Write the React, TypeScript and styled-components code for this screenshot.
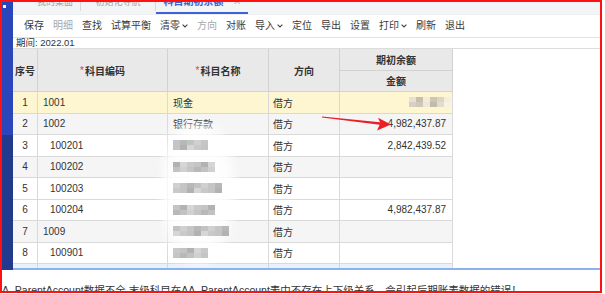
import React from 'react';
import styled, { createGlobalStyle } from 'styled-components';

const GlobalStyle = createGlobalStyle`
  html, body {
    margin: 0;
    padding: 0;
    background: #fff;
  }
  body {
    font-family: "Liberation Sans", "Noto Sans CJK SC", sans-serif;
    color: #333;
  }
`;

type Row = {
  no: number;
  code: string;
  level: 1 | 2;
  name?: string;
  blur?: number;
  dir: string;
  amount?: string;
  blurAmount?: boolean;
  tone: 'sel' | 'odd' | 'even' | 'blue';
};

const rows: Row[] = [
  { no: 1, code: '1001', level: 1, name: '现金', dir: '借方', blurAmount: true, tone: 'sel' },
  { no: 2, code: '1002', level: 1, name: '银行存款', dir: '借方', amount: '4,982,437.87', tone: 'even' },
  { no: 3, code: '100201', level: 2, blur: 5, dir: '借方', amount: '2,842,439.52', tone: 'odd' },
  { no: 4, code: '100202', level: 2, blur: 6, dir: '借方', tone: 'even' },
  { no: 5, code: '100203', level: 2, blur: 7, dir: '借方', tone: 'odd' },
  { no: 6, code: '100204', level: 2, blur: 6, dir: '借方', amount: '4,982,437.87', tone: 'odd' },
  { no: 7, code: '1009', level: 1, blur: 8, dir: '借方', tone: 'even' },
  { no: 8, code: '100901', level: 2, blur: 5, dir: '借方', tone: 'odd' },
  { no: 9, code: '100902', level: 2, blur: 5, dir: '借方', tone: 'blue' },
];

const tools = [
  { label: '保存' },
  { label: '明细', off: true },
  { label: '查找' },
  { label: '试算平衡' },
  { label: '清零', menu: true },
  { label: '方向', off: true },
  { label: '对账' },
  { label: '导入', menu: true },
  { label: '定位' },
  { label: '导出' },
  { label: '设置' },
  { label: '打印', menu: true },
  { label: '刷新' },
  { label: '退出' },
];

const shades = ['#c9c9c9', '#b9b7b8', '#d6d6d6', '#c2c6c6', '#b3b1b2', '#d0d0d0', '#c6c3c4', '#bfc4c3'];

const Frame = styled.div`
  width: 602px;
  height: 293px;
  box-sizing: border-box;
  border: 2px solid #ff1111;
  display: flex;
  flex-direction: column;
  overflow: hidden;
`;

const Upper = styled.div`
  height: 268px;
  flex: none;
  display: flex;
`;

const Sidebar = styled.div`
  width: 11px;
  flex: none;
  display: flex;
  flex-direction: column;
  background: #213a8d;
`;

const SideTop = styled.div`
  height: 133px;
  background: #2b46ba;
  padding: 3px 0 0 1px;
  box-sizing: border-box;
`;

const SideDot = styled.div`
  width: 3px;
  height: 3px;
  background: #f4f6ff;
`;

const Main = styled.div`
  flex: 1;
  min-width: 0;
  display: flex;
  flex-direction: column;
  border-bottom: 2px solid #8db1ea;
`;

const TabBar = styled.div`
  height: 12px;
  flex: none;
  display: flex;
  align-items: flex-end;
  background: #f3f4f6;
  overflow: hidden;
  padding-left: 17px;
`;

const Tab = styled.div<{ $active?: boolean; $w: number }>`
  width: ${p => p.$w}px;
  height: 20px;
  flex: none;
  box-sizing: border-box;
  display: flex;
  align-items: flex-start;
  justify-content: center;
  gap: 9px;
  line-height: 16px;
  font-size: ${p => (p.$active ? 10 : 9)}px;
  font-weight: ${p => (p.$active ? 700 : 400)};
  color: ${p => (p.$active ? '#3b62d6' : '#a3a3a3')};
  border-bottom: 2px solid ${p => (p.$active ? '#3b62d6' : 'transparent')};
`;

const TabSep = styled.div`
  width: 1px;
  height: 9px;
  margin-bottom: 3px;
  flex: none;
  background: #d8d8d8;
`;

const TabClose = styled.span`
  font-weight: 400;
  color: #b8b8b8;
  font-size: 10px;
`;

const Toolbar = styled.div`
  height: 24px;
  flex: none;
  box-sizing: border-box;
  border-top: 1px solid #eceef1;
  border-bottom: 1px solid #e2e2e2;
  display: flex;
  align-items: center;
  gap: 9px;
  padding-left: 11px;
  background: #fff;
`;

const Tool = styled.div<{ $off?: boolean }>`
  display: flex;
  align-items: center;
  gap: 2px;
  font-size: 10px;
  line-height: 12px;
  color: ${p => (p.$off ? '#a8a8a8' : '#3a3a3a')};
`;

const Period = styled.div`
  height: 10px;
  flex: none;
  font-size: 9.5px;
  line-height: 10px;
  padding-left: 3px;
  color: #333;
`;

const TableArea = styled.div`
  position: relative;
  flex: 1;
  min-height: 0;
  border-top: 1px solid #dcdcdc;
  overflow: hidden;
`;

const Grid = styled.div`
  display: grid;
  width: 440px;
  grid-template-columns: 25px 130px 101px 71px 113px;
  grid-auto-rows: 21.5px;
  font-size: 10px;
`;

const HeadCell = styled.div<{ $tall?: boolean; $col?: number }>`
  grid-row: ${p => (p.$tall ? 'span 2' : 'auto')};
  ${p => (p.$col ? `grid-column: ${p.$col};` : '')}
  box-sizing: border-box;
  background: #e9e9e9;
  border-right: 1px solid #d2d2d2;
  border-bottom: 1px solid #d2d2d2;
  display: flex;
  align-items: center;
  justify-content: center;
  font-weight: 700;
  color: #333;
`;

const Star = styled.span`
  color: #e63a3a;
  font-weight: 400;
  margin-right: 1px;
`;

const toneBg = {
  sel: '#fdf6d1',
  odd: '#ffffff',
  even: '#f5f5f5',
  blue: '#e9f1fc',
};

const Cell = styled.div<{ $tone: Row['tone']; $align?: 'left' | 'center' | 'right'; $pad?: number }>`
  box-sizing: border-box;
  background: ${p => toneBg[p.$tone]};
  border-right: 1px solid #d9d9d9;
  border-bottom: 1px solid #d9d9d9;
  display: flex;
  align-items: center;
  justify-content: ${p => (p.$align === 'right' ? 'flex-end' : p.$align === 'center' ? 'center' : 'flex-start')};
  padding: 0 ${p => (p.$align === 'right' ? p.$pad ?? 6 : 0)}px 0 ${p => (p.$align === 'right' ? 0 : p.$pad ?? 0)}px;
  color: #333;
  white-space: nowrap;
  overflow: hidden;
`;

const Mosaic = styled.div`
  position: relative;
  z-index: 2;
  display: grid;
  grid-auto-flow: column;
  grid-template-rows: 5px 5px;
  grid-auto-columns: 7px;
  filter: blur(0.7px);
`;

const Tile = styled.span<{ $c: string }>`
  background: ${p => p.$c};
`;

const Blob = styled.div`
  position: absolute;
  z-index: 1;
  left: 148px;
  top: 74px;
  width: 80px;
  height: 150px;
  background: radial-gradient(ellipse at 45% 45%, rgba(255,255,255,0.95) 0%, rgba(255,255,255,0.8) 50%, rgba(255,255,255,0) 72%);
  filter: blur(3px);
  pointer-events: none;
`;

const Arrow = styled.svg`
  position: absolute;
  z-index: 3;
  left: 0;
  top: 0;
  pointer-events: none;
`;

const Bottom = styled.div`
  flex: 1;
  padding-top: 14px;
  font-size: 10.5px;
  line-height: 12px;
  white-space: nowrap;
  color: #333;
`;

const Chevron = () => (
  <svg width="6" height="4" viewBox="0 0 6 4">
    <path d="M0.6 0.6 L3 3 L5.4 0.6" fill="none" stroke="#444" strokeWidth="1.1" />
  </svg>
);

const BlurBlocks = ({ n, seed }: { n: number; seed: number }) => (
  <Mosaic>
    {Array.from({ length: n * 2 }).map((_, i) => (
      <Tile key={i} $c={shades[(i * 3 + seed) % shades.length]} />
    ))}
  </Mosaic>
);

const AmountBlur = () => (
  <Mosaic>
    {['#e6e0d2', '#d7d0c2', '#c6bfae', '#cfc7b7', '#f2ecdc', '#efe8d8', '#cdc5b5', '#c3bba9', '#dcd5c5', '#e3dccc', '#f4eedf', '#f8f2e2'].map((c, i) => (
      <Tile key={i} $c={c} />
    ))}
  </Mosaic>
);

export default function App() {
  return (
    <>
      <GlobalStyle />
      <Frame>
        <Upper>
          <Sidebar>
            <SideTop>
              <SideDot />
            </SideTop>
          </Sidebar>
          <Main>
            <TabBar>
              <Tab $w={50}>我的桌面</Tab>
              <TabSep />
              <Tab $w={74}>初始化导航</Tab>
              <TabSep />
              <Tab $w={92} $active>
                科目期初余额<TabClose>✕</TabClose>
              </Tab>
            </TabBar>
            <Toolbar>
              {tools.map(t => (
                <Tool key={t.label} $off={t.off}>
                  {t.label}
                  {t.menu && <Chevron />}
                </Tool>
              ))}
            </Toolbar>
            <Period>期间: 2022.01</Period>
            <TableArea>
              <Grid>
                <HeadCell $tall>序号</HeadCell>
                <HeadCell $tall>
                  <Star>*</Star>科目编码
                </HeadCell>
                <HeadCell $tall>
                  <Star>*</Star>科目名称
                </HeadCell>
                <HeadCell $tall>方向</HeadCell>
                <HeadCell>期初余额</HeadCell>
                <HeadCell $col={5}>金额</HeadCell>
                {rows.map(r => (
                  <React.Fragment key={r.no}>
                    <Cell $tone={r.tone} $align="center">{r.no}</Cell>
                    <Cell $tone={r.tone} $pad={r.level === 1 ? 5 : 12}>{r.code}</Cell>
                    <Cell $tone={r.tone} $pad={5}>
                      {r.name ?? <BlurBlocks n={r.blur ?? 5} seed={r.no} />}
                    </Cell>
                    <Cell $tone={r.tone} $pad={4}>{r.dir}</Cell>
                    <Cell $tone={r.tone} $align="right" $pad={r.blurAmount ? 1 : 6}>
                      {r.blurAmount ? <AmountBlur /> : r.amount}
                    </Cell>
                  </React.Fragment>
                ))}
              </Grid>
              <Blob />
              <Arrow width="440" height="100" viewBox="0 0 440 100">
                <polygon
                  points="309,67.6 367,73.2 365,68.8 378,75.6 364,81.4 366.6,75.8 309,68.6"
                  fill="#ea1f27"
                />
              </Arrow>
            </TableArea>
          </Main>
        </Upper>
        <Bottom>A_ParentAccount数据不全,末级科目在AA_ParentAccount表中不存在上下级关系，会引起后期账表数据的错误！</Bottom>
      </Frame>
    </>
  );
}
